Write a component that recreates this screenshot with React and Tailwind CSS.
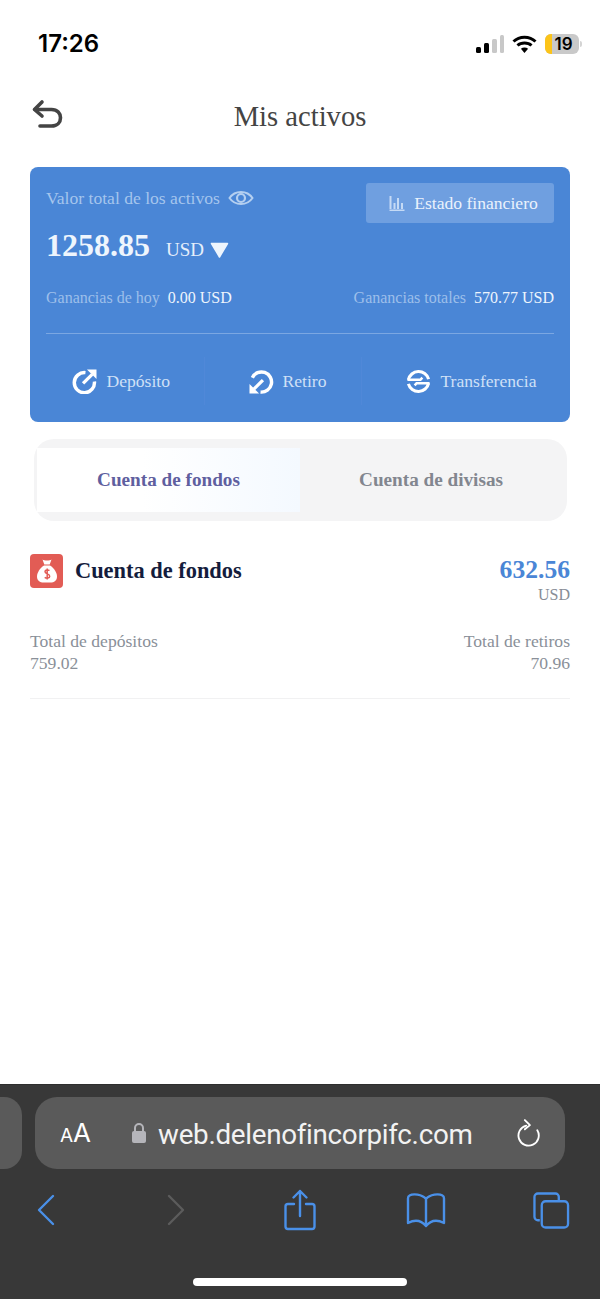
import React from 'react';

const SERIF = 'font-["Liberation_Serif",serif]';

function StatusBar() {
  return (
    <div className="h-[88px] px-[38px] flex items-start justify-between font-['Inter',sans-serif]">
      <span className="mt-[29px] text-[24px] leading-[30px] font-semibold text-black">17:26</span>
      <div className="mt-[34px] mr-[-20px] flex items-center">
        <svg width="28" height="20" viewBox="0 0 28 20">
          <rect x="0" y="13" width="5" height="6" rx="1.5" fill="#000" />
          <rect x="8" y="9" width="5" height="10" rx="1.5" fill="#000" />
          <rect x="16" y="5" width="5" height="14" rx="1.5" fill="#c8c8c8" />
          <rect x="24" y="1" width="4" height="18" rx="1.5" fill="#c8c8c8" />
        </svg>
        <svg className="ml-[8px]" width="25" height="19" viewBox="0 0 25 19" fill="none" stroke="#000" strokeWidth="3">
          <path d="M1.5 6.5C7.5 .8 17.5 .8 23.500 6.500" />
          <path d="M5.500 10.500C9 7.200 16 7.200 19.500 10.500" />
          <path d="M12.500 18l-3.600-4.200c2-1.700 5.200-1.700 7.200 0z" fill="#000" stroke="none" />
        </svg>
        <div className="ml-[8px] w-[34px] h-[20px] rounded-[6px] bg-[#c9c9c9] overflow-hidden relative flex items-center justify-center">
          <div className="absolute left-0 top-0 bottom-0 w-[7px] bg-[#fcc419]" />
          <span className="relative ml-[3px] text-[17px] leading-[20px] font-semibold text-black">19</span>
        </div>
        <div className="ml-[1px] w-[2px] h-[6px] rounded-r bg-[#d4d4d4]" />
      </div>
    </div>
  );
}

function Header() {
  return (
    <div className="h-[56px] relative flex items-center justify-center">
      <svg className="absolute left-[31px] top-[11px]" width="34" height="34" viewBox="0 0 34 34" fill="none" stroke="#444" strokeWidth="3.600" strokeLinecap="round" strokeLinejoin="round">
        <path d="M11 3 L3.500 10.500 L11 17" />
        <path d="M4 10.500 H20.500 C26.500 10.500 29.500 14.500 29.500 18.700 C29.500 23 26.500 27 20.500 27 H9" />
      </svg>
      <h1 className={`${SERIF} mt-[1px] text-[28.6px] leading-[36px] font-normal text-[#444]`}>Mis activos</h1>
    </div>
  );
}

function DepositIcon() {
  return (
    <svg width="25" height="25" viewBox="0 0 26 26" fill="none" stroke="#fff" strokeWidth="3.600">
      <path d="M14 3.800A10.500 10.500 0 1 0 23.300 13" />
      <path d="M11.500 15 L21 5.500" strokeWidth="3.400" />
      <path d="M15.500 .5H25.500V10.500z" fill="#fff" stroke="none" />
    </svg>
  );
}

function WithdrawIcon() {
  return (
    <svg width="25" height="25" viewBox="0 0 26 26" fill="none" stroke="#fff" strokeWidth="3.600">
      <path d="M3.500 9A10.500 10.500 0 1 1 12 24" />
      <path d="M14.500 11.500 L5 21" strokeWidth="3.400" />
      <path d="M.5 15.500V25.500H10.500z" fill="#fff" stroke="none" />
    </svg>
  );
}

function TransferIcon() {
  return (
    <svg width="25" height="25" viewBox="0 0 26 26" fill="none" stroke="#fff" strokeWidth="3.200">
      <path d="M2.500 11.300A10.800 10.800 0 0 1 23.500 10.500" />
      <path d="M23.500 14.700A10.800 10.800 0 0 1 2.500 15.500" />
      <path d="M1.500 11.300H15L17 9" strokeWidth="2.600" />
      <path d="M24.500 14.700H11L9 17" strokeWidth="2.600" />
    </svg>
  );
}

function BalanceCard() {
  return (
    <div className={`${SERIF} mx-[30px] mt-[23px] h-[255px] rounded-[8px] bg-[#4a86d6] px-[16px] flex flex-col`}>
      <div className="flex justify-between items-start pt-[16px]">
        <div className="flex items-center pt-[2px] gap-[8px]">
          <span className="text-[17.6px] leading-[26px] text-[#a5c5ed]">Valor total de los activos</span>
          <svg width="26" height="20" viewBox="0 0 26 20" fill="none" stroke="#b4cff0" strokeWidth="2">
            <path d="M1.500 10C7 2 19 2 24.500 10C19 18 7 18 1.500 10z" />
            <circle cx="13" cy="10" r="4" strokeWidth="2.200" />
          </svg>
        </div>
        <button className="w-[188px] h-[40px] rounded-[3px] bg-[#6f9fe0] flex items-center justify-center pl-[7px] gap-[9px]">
          <svg width="16" height="16" viewBox="0 0 16 16" fill="#c5daf5">
            <rect x="0.500" y="1" width="2" height="13" />
            <rect x="4.500" y="8" width="2" height="6" />
            <rect x="8" y="3" width="2" height="11" />
            <rect x="12" y="8" width="2" height="6" />
            <rect x="0.500" y="14.500" width="15" height="1.500" />
          </svg>
          <span className="text-[17.6px] leading-[24px] text-[#eaf2fc]">Estado financiero</span>
        </button>
      </div>
      <div className="flex items-center h-[44px]">
        <span className="text-[32px] leading-[40px] font-bold text-[#eef5fd]">1258.85</span>
        <span className="ml-[16px] mt-[10px] text-[19px] leading-[24px] text-[#e6effb]">USD</span>
        <svg className="ml-[6px] mt-[10px]" width="19" height="16" viewBox="0 0 19 16">
          <path d="M1.500 1.500h16L9.500 15z" fill="#eef5fd" stroke="#eef5fd" strokeWidth="1.500" strokeLinejoin="round" />
        </svg>
      </div>
      <div className="flex justify-between items-center mt-[19px] h-[24px] text-[16px]">
        <div>
          <span className="text-[#9dbfea]">Ganancias de hoy</span>
          <span className="ml-[8px] text-[#eef5fd]">0.00 USD</span>
        </div>
        <div>
          <span className="text-[#9dbfea]">Ganancias totales</span>
          <span className="ml-[8px] text-[#eef5fd]">570.77 USD</span>
        </div>
      </div>
      <div className="mt-[23px] h-px bg-[#7ba7e2]" />
      <div className="flex items-center h-[88px] pt-[6px] mx-[-16px]">
        <div className="w-[175px] h-[48px] flex items-center justify-end pr-[34px] gap-[9px] border-r border-[#5088d8]">
          <DepositIcon />
          <span className="text-[17.6px] text-[#cfe0f6]">Depósito</span>
        </div>
        <div className="w-[157px] h-[48px] flex items-center justify-center pl-[9px] gap-[9px] border-r border-[#5088d8]">
          <WithdrawIcon />
          <span className="text-[17.6px] text-[#cfe0f6]">Retiro</span>
        </div>
        <div className="flex-1 h-[48px] flex items-center justify-center pl-[11px] gap-[9px]">
          <TransferIcon />
          <span className="text-[17.6px] text-[#cfe0f6]">Transferencia</span>
        </div>
      </div>
    </div>
  );
}

function Tabs() {
  return (
    <div className={`${SERIF} ml-[34px] mr-[33px] mt-[17px] h-[82px] rounded-[20px] bg-[#f4f4f5] flex items-center pl-[3px] text-[19.2px] font-bold`}>
      <div className="w-[263px] h-[64px] bg-gradient-to-r from-white from-40% to-[#f4f9ff] flex items-center justify-center text-[#5f5f9f]">
        Cuenta de fondos
      </div>
      <div className="flex-1 h-[64px] flex items-center justify-center pr-[5px] text-[#82868f]">
        Cuenta de divisas
      </div>
    </div>
  );
}

function AccountInfo() {
  return (
    <div className={`${SERIF} mx-[30px] mt-[32px]`}>
      <div className="flex justify-between items-start">
        <div className="flex items-center gap-[12px]">
          <div className="w-[33px] h-[34px] rounded-[4px] bg-[#e25c55] flex items-center justify-center">
            <svg width="22" height="26" viewBox="0 0 22 26">
              <path d="M6.500 1.500C8 2.800 14 2.800 15.500 1.500L13.700 6.500H8.300z" fill="#fff" />
              <path d="M8 7.500h6C18 10 21 14.500 21 18.500C21 22.500 18 24.500 14.500 24.500h-7C4 24.500 1 22.500 1 18.500C1 14.500 4 10 8 7.500z" fill="#fff" />
              <path d="M13.500 12.500C12 11.500 9 11.700 9 13.800C9 16.300 13.700 15.500 13.700 18.200C13.700 20.300 10.500 20.500 8.700 19.300M11.200 10.500V21.500" fill="none" stroke="#e25c55" strokeWidth="1.500" />
            </svg>
          </div>
          <span className="text-[22.4px] leading-[36px] font-bold text-[#141c3c]">Cuenta de fondos</span>
        </div>
        <div className="text-right">
          <div className="pt-[1px] text-[25.6px] leading-[31px] font-bold text-[#4a86d6]">632.56</div>
          <div className="text-[16px] leading-[20px] text-[#878d96]">USD</div>
        </div>
      </div>
      <div className="flex justify-between mt-[25px] text-[17.6px] leading-[22px] text-[#8a9099]">
        <div>
          <div>Total de depósitos</div>
          <div>759.02</div>
        </div>
        <div className="text-right">
          <div>Total de retiros</div>
          <div>70.96</div>
        </div>
      </div>
      <div className="mt-[24px] h-px bg-[#f1f1f2]" />
    </div>
  );
}

function SafariBar() {
  return (
    <div className="h-[215px] bg-[#383838] border-t border-[#2e2e2e] font-['Inter',sans-serif] relative">
      <div className="flex mt-[12px] h-[72px]">
        <div className="w-[22px] rounded-r-[18px] bg-[#5a5a5a]" />
        <div className="ml-[13px] w-[530px] rounded-[22px] bg-[#5a5a5a] flex items-center pl-[25px] pr-[24px] text-white">
          <span className="text-[19px] leading-none mt-[4px]">A</span>
          <span className="text-[26px] leading-none">A</span>
          <svg className="ml-[40px]" width="16" height="22" viewBox="0 0 16 22">
            <path d="M4 9V6a4 4 0 0 1 8 0v3" fill="none" stroke="#b5b5ba" strokeWidth="2" />
            <rect x="1" y="9" width="14" height="12" rx="2" fill="#b5b5ba" />
          </svg>
          <span className="ml-[11px] mt-[3px] text-[27.8px] leading-none tracking-[-0.3px] text-[#f2f2f2] font-['Roboto',sans-serif]">web.delenofincorpifc.com</span>
          <svg className="ml-auto" width="24" height="30" viewBox="0 0 26 32" fill="none" stroke="#fff" strokeWidth="2" strokeLinecap="round" strokeLinejoin="round">
            <path d="M10 8A11 11 0 1 0 22 13" />
            <path d="M8.500 2 L14 7.500 L8.500 12" />
          </svg>
        </div>
      </div>
      <div className="flex items-center h-[62px] mt-[10px] relative">
        <svg className="ml-[37px]" width="18" height="32" viewBox="0 0 18 32" fill="none" stroke="#4a90e8" strokeWidth="2.400" strokeLinecap="round" strokeLinejoin="round">
          <path d="M16 2 L2 16 L16 30" />
        </svg>
        <svg className="ml-[112px]" width="18" height="32" viewBox="0 0 18 32" fill="none" stroke="#5c5c5c" strokeWidth="2.400" strokeLinecap="round" strokeLinejoin="round">
          <path d="M2 2 L16 16 L2 30" />
        </svg>
        <svg className="ml-[99px]" width="32" height="42" viewBox="0 0 32 42" fill="none" stroke="#4a90e8" strokeWidth="2.400" strokeLinecap="round" strokeLinejoin="round">
          <path d="M10 15H4a2.500 2.500 0 0 0-2.500 2.500V37.500A2.500 2.500 0 0 0 4 40H28a2.500 2.500 0 0 0 2.500-2.500V17.500A2.500 2.500 0 0 0 28 15H22" />
          <path d="M16 27V2M9.500 8.500 L16 2 L22.500 8.500" />
        </svg>
        <svg className="ml-[90px]" width="40" height="36" viewBox="0 0 40 36" fill="none" stroke="#4a90e8" strokeWidth="2.400" strokeLinecap="round" strokeLinejoin="round">
          <path d="M20 7C16 2 7 1.500 3.500 3.500C2.500 4 2 5 2 6.500V31C8 28 15 28 20 34C25 28 32 28 38 31V6.500C38 5 37.500 4 36.500 3.500C33 1.500 24 2 20 7zM20 7V33" />
        </svg>
        <svg className="ml-[87px]" width="37" height="37" viewBox="0 0 38 38" fill="none" stroke="#4a90e8" strokeWidth="2.400" strokeLinejoin="round">
          <path d="M7 29H5a3.500 3.500 0 0 1-3.500-3.500V5A3.500 3.500 0 0 1 5 1.500H23A3.500 3.500 0 0 1 26.500 5V9" />
          <rect x="9" y="9.500" width="27" height="27" rx="4" />
        </svg>
      </div>
      <div className="absolute left-[193px] bottom-[13px] w-[214px] h-[8px] rounded-full bg-white" />
    </div>
  );
}

export default function App() {
  return (
    <div className="h-[1299px] w-[600px] bg-white flex flex-col overflow-hidden">
      <StatusBar />
      <Header />
      <BalanceCard />
      <Tabs />
      <AccountInfo />
      <div className="flex-1" />
      <SafariBar />
    </div>
  );
}
